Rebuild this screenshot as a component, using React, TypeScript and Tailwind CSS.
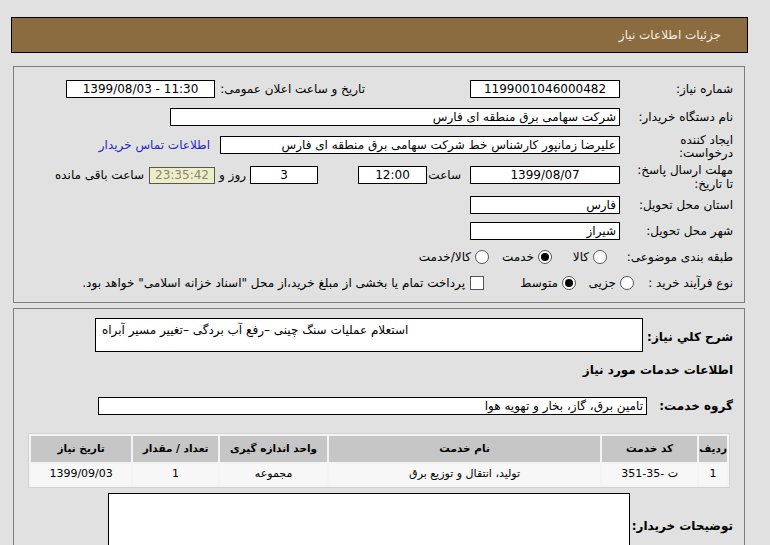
import React from "react";

function Box({ w, children, className = "" }: { w: string; children?: React.ReactNode; className?: string }) {
  return (
    <div className={`${w} h-[18px] shrink-0 border border-black bg-white flex items-center px-[3px] leading-none ${className}`}>
      {children}
    </div>
  );
}

function Radio({ checked }: { checked?: boolean }) {
  return (
    <span className="inline-flex h-[14px] w-[14px] shrink-0 items-center justify-center rounded-full border border-[#555] bg-white">
      {checked && <span className="h-[8px] w-[8px] rounded-full bg-black" />}
    </span>
  );
}

export default function App() {
  const cols = [
    { t: "ردیف", w: "w-[27px]", v: "1" },
    { t: "کد خدمت", w: "w-[95px]", v: "ت -35-351" },
    { t: "نام خدمت", w: "w-[271px]", v: "تولید، انتقال و توزیع برق" },
    { t: "واحد اندازه گیری", w: "w-[107px]", v: "مجموعه" },
    { t: "تعداد / مقدار", w: "w-[85px]", v: "1" },
    { t: "تاریخ نیاز", w: "w-[100px]", v: "1399/09/03" },
  ];

  return (
    <div
      dir="rtl"
      className="h-[545px] w-[770px] overflow-hidden bg-[#e1e1e1] pt-[17px] text-[12px] text-black font-['DejaVu_Sans',sans-serif]"
    >
      {/* Header */}
      <div className="mr-[22px] flex h-[36px] w-[737px] items-center border border-black bg-[#8b6c41] pr-[26px] text-[12px] text-[#f4ede0]">
        جزئیات اطلاعات نیاز
      </div>

      {/* Panel 1 */}
      <div className="mr-[25px] mt-[13px] h-[237px] w-[732px] border border-[#7d7d7d] pr-[11px] pt-[8px]">
        {/* row 1 */}
        <div className="flex h-[28px] items-center">
          <div className="w-[113px] shrink-0">شماره نیاز:</div>
          <Box w="w-[150px]" className="justify-center">1199001046000482</Box>
          <div className="w-[105px] shrink-0" />
          <div className="w-[150px] shrink-0">تاریخ و ساعت اعلان عمومی:</div>
          <Box w="w-[149px]" className="justify-center">
            <span dir="ltr">1399/08/03 - 11:30</span>
          </Box>
        </div>
        {/* row 2 */}
        <div className="flex h-[27px] items-center">
          <div className="w-[113px] shrink-0">نام دستگاه خریدار:</div>
          <Box w="w-[450px]">شرکت سهامی برق منطقه ای فارس</Box>
        </div>
        {/* row 3 */}
        <div className="flex h-[29px] items-center">
          <div className="w-[113px] shrink-0 pt-[4px] leading-[13px]">
            ایجاد کننده
            <br />
            درخواست:
          </div>
          <Box w="w-[400px]">علیرضا زمانپور کارشناس خط شرکت سهامی برق منطقه ای فارس</Box>
          <a className="mr-[10px] text-[#2626c8]">اطلاعات تماس خریدار</a>
        </div>
        {/* row 4 */}
        <div className="flex h-[32px] items-center">
          <div className="w-[113px] shrink-0 pt-[4px] leading-[14px]">
            مهلت ارسال پاسخ:
            <br />
            تا تاریخ:
          </div>
          <Box w="w-[150px]" className="justify-center">1399/08/07</Box>
          <div className="w-[43px] shrink-0 pr-[9px]">ساعت</div>
          <Box w="w-[69px]" className="justify-center">12:00</Box>
          <div className="w-[40px] shrink-0" />
          <Box w="w-[68px]" className="justify-center">3</Box>
          <div className="w-[35px] shrink-0 pr-[4px]">روز و</div>
          <div className="flex h-[17px] w-[66px] shrink-0 items-center justify-center border border-[#555] bg-[#efedc6] text-[12px] text-[#85857a]">
            23:35:42
          </div>
          <div className="pr-[5px]">ساعت باقی مانده</div>
        </div>
        {/* row 5 */}
        <div className="flex h-[27px] items-center">
          <div className="w-[113px] shrink-0">استان محل تحویل:</div>
          <Box w="w-[150px]">فارس</Box>
        </div>
        {/* row 6 */}
        <div className="flex h-[25px] items-center">
          <div className="w-[113px] shrink-0">شهر محل تحویل:</div>
          <Box w="w-[150px]">شیراز</Box>
        </div>
        {/* row 7 */}
        <div className="flex h-[27px] items-center">
          <div className="w-[126px] shrink-0">طبقه بندی موضوعی:</div>
          <Radio />
          <span className="mr-[4px] w-[37px]">کالا</span>
          <Radio checked />
          <span className="mr-[4px] w-[45px]">خدمت</span>
          <Radio />
          <span className="mr-[4px]">کالا/خدمت</span>
        </div>
        {/* row 8 */}
        <div className="flex h-[25px] items-center">
          <div className="w-[99px] shrink-0">نوع فرآیند خرید :</div>
          <Radio />
          <span className="mr-[4px] w-[40px]">جزیی</span>
          <Radio checked />
          <span className="mr-[4px] w-[74px]">متوسط</span>
          <span className="h-[14px] w-[14px] shrink-0 border border-[#555] bg-white" />
          <span className="mr-[5px]">
            پرداخت تمام یا بخشی از مبلغ خرید،از محل "اسناد خزانه اسلامی" خواهد بود.
          </span>
        </div>
      </div>

      {/* Panel 2 */}
      <div className="mr-[25px] mt-[5px] h-[300px] w-[732px] border border-[#7d7d7d] pr-[11px] pt-[9px]">
        <div className="flex items-center">
          <div className="w-[90px] shrink-0 pt-[4px] font-bold">شرح کلي نياز:</div>
          <div className="h-[34px] w-[548px] border border-black bg-white pl-[6px] pt-[2px] text-left">
            استعلام عملیات سنگ چینی –رفع آب بردگی –تغییر مسیر آبراه
          </div>
        </div>
        <div className="mt-[9px] h-[14px] font-bold">اطلاعات خدمات مورد نياز</div>
        <div className="mt-[22px] flex items-center">
          <div className="w-[86px] shrink-0 font-bold">گروه خدمت:</div>
          <Box w="w-[549px]">تامین برق، گاز، بخار و تهویه هوا</Box>
        </div>
        {/* table */}
        <div className="mr-[3px] mt-[18px]">
          <table className="border-separate border-spacing-[2px] border border-[#d2d2d2] bg-[#f4f4f4]">
            <thead>
              <tr>
                {cols.map((c) => (
                  <th key={c.t} className={`${c.w} h-[26px] bg-[#c6c6c6] p-0 text-center text-[10.5px] font-bold`}>
                    {c.t}
                  </th>
                ))}
              </tr>
            </thead>
            <tbody>
              <tr>
                {cols.map((c) => (
                  <td key={c.t} className={`${c.w} h-[21px] bg-[#f7f7f7] p-0 text-center text-[11px]`}>
                    {c.v}
                  </td>
                ))}
              </tr>
            </tbody>
          </table>
        </div>
        <div className="mt-[5px] flex items-start">
          <div className="w-[103px] shrink-0 pt-[24px] font-bold">توضیحات خریدار:</div>
          <div className="h-[80px] w-[522px] border border-black bg-white" />
        </div>
      </div>
    </div>
  );
}
